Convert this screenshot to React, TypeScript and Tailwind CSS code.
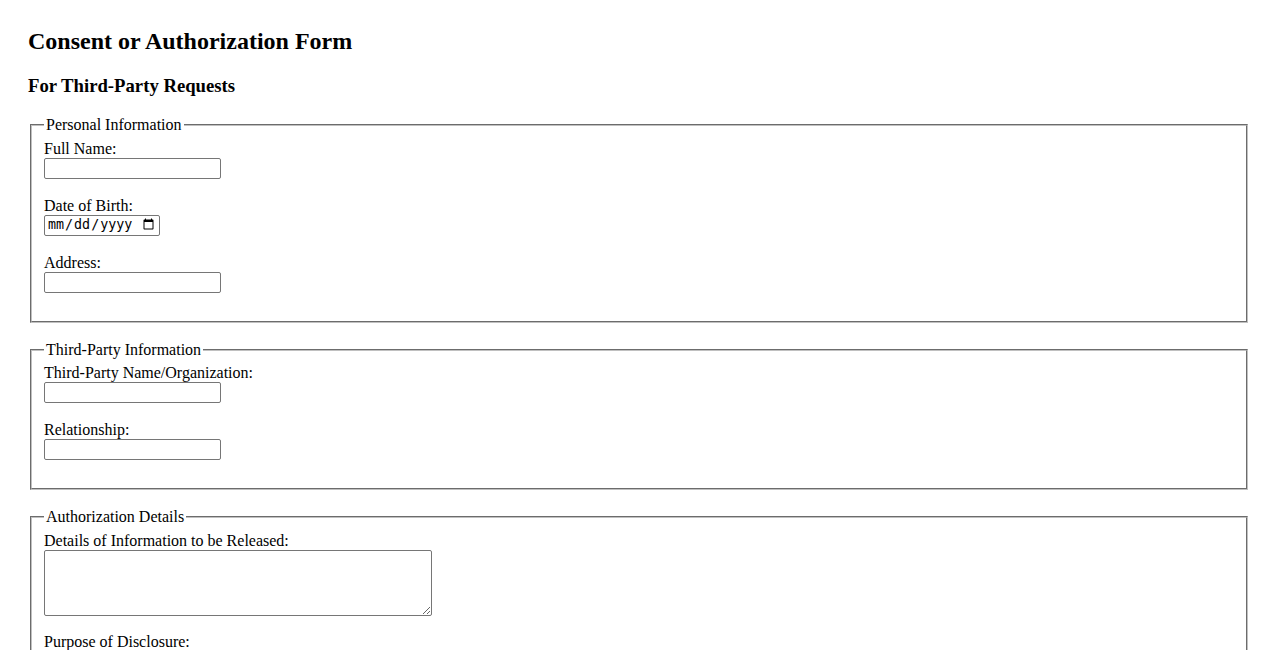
import React from "react";

function Field({ label, children }: { label: string; children: React.ReactNode }) {
  return (
    <div className="flex flex-col items-start mb-[18px]">
      <label className="block leading-[18px]">{label}</label>
      {children}
    </div>
  );
}

const inputCls =
  "block w-[177px] h-[21px] border border-[#767676] rounded-[2px] bg-white px-[2px] py-[1px] text-[13.33px] font-['Liberation_Sans',sans-serif]";

function Fieldset({ legend, children }: { legend: string; children: React.ReactNode }) {
  return (
    <fieldset className="mx-[2px] border-2 [border-style:groove] border-[#c0c0c0] px-[12px] pt-[5.6px] pb-[10px] mb-[18px] min-w-0">
      <legend className="px-[2px] leading-[18px]">{legend}</legend>
      {children}
    </fieldset>
  );
}

export default function App() {
  return (
    <div className="bg-white min-h-screen px-[28px] pt-[8px] pb-[28px] text-black text-[16px] font-['Liberation_Serif','Times_New_Roman',serif]">
      <h2 className="mt-[20px] mb-[20px] text-[24px] font-bold leading-[27px]">Consent or Authorization Form</h2>
      <h3 className="mb-[20px] text-[18.72px] font-bold leading-[21px]">For Third-Party Requests</h3>

      <form>
        <Fieldset legend="Personal Information">
          <Field label="Full Name:">
            <input type="text" className={inputCls} />
          </Field>
          <Field label="Date of Birth:">
            <input
              type="date"
              className="block w-[116px] h-[21px] border border-[#767676] rounded-[2px] bg-white px-[2px] py-[1px] text-[13.33px] font-['DejaVu_Sans_Mono',monospace]"
            />
          </Field>
          <Field label="Address:">
            <input type="text" className={inputCls} />
          </Field>
        </Fieldset>

        <Fieldset legend="Third-Party Information">
          <Field label="Third-Party Name/Organization:">
            <input type="text" className={inputCls} />
          </Field>
          <Field label="Relationship:">
            <input type="text" className={inputCls} />
          </Field>
        </Fieldset>

        <Fieldset legend="Authorization Details">
          <div className="flex flex-col items-start mb-[17px]">
            <label className="block leading-[18px]">Details of Information to be Released:</label>
            <textarea className="block w-[388px] h-[66px] border border-[#767676] rounded-[2px] bg-white px-[2px] py-[2px] text-[13.33px] font-['Liberation_Mono',monospace] resize" />
          </div>
          <div className="flex flex-col items-start mb-[17px]">
            <label className="block leading-[18px]">Purpose of Disclosure:</label>
            <textarea className="block w-[388px] h-[66px] border border-[#767676] rounded-[2px] bg-white px-[2px] py-[2px] text-[13.33px] font-['Liberation_Mono',monospace] resize" />
          </div>
          <Field label="Duration of Authorization:">
            <input type="text" className={inputCls} />
          </Field>
        </Fieldset>
      </form>
    </div>
  );
}
